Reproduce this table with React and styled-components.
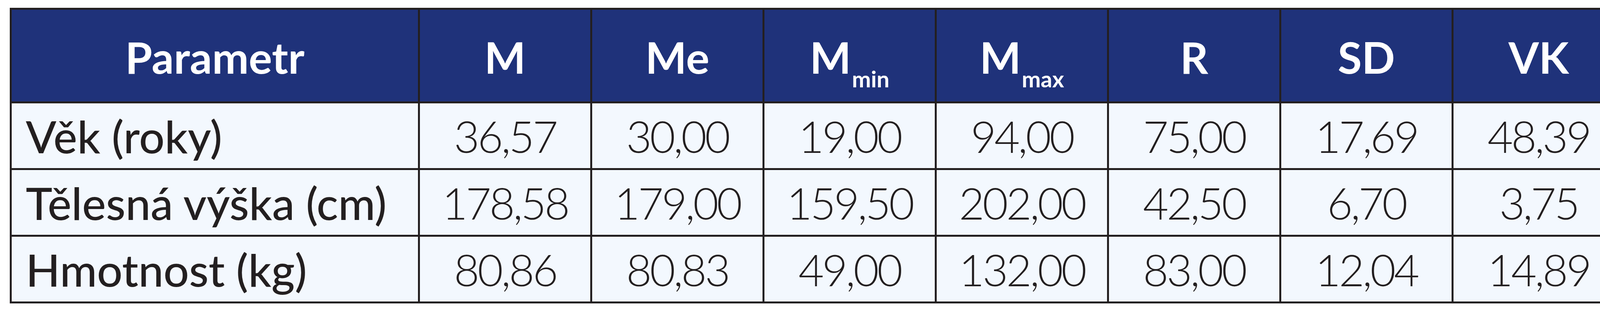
import React from 'react';
import styled, {createGlobalStyle} from 'styled-components';

const GlobalStyle = createGlobalStyle`
  html, body {
    margin: 0;
    padding: 0;
    background: #ffffff;
  }
  body {
    font-family: Lato, "Open Sans", "Liberation Sans", sans-serif;
  }
`

const Page = styled.div`
  padding: 20px 0 0 25px;
`

// the dark background shows through the gaps as the cell borders
const StatsGrid = styled.div`
  display: grid;
  grid-template-columns: 1040px repeat(7, 436px);
  grid-template-rows: 235px repeat(3, 166px);
  gap: 5px;
  padding: 5px;
  width: max-content;
  background-color: #231f20;
  color: #231f20;
`

const HeadCell = styled.div`
  display: flex;
  align-items: center;
  justify-content: center;
  padding-top: 6px;
  background-color: #1f327a;
  color: #ffffff;
  font-weight: 700;
  font-size: 112px;
  line-height: 1;

  sub {
    font-size: 58px;
    line-height: 0;
    align-self: flex-end;
    margin: 0 0 0 2px;
    transform: translateY(-58px);
  }
`

const Cell = styled.div`
  display: flex;
  align-items: center;
  justify-content: ${props => props.$label ? 'flex-start' : 'center'};
  padding: ${props => props.$label ? '0 0 0 36px' : '0'};
  background-color: #f3f8fe;
  font-size: ${props => props.$label ? '115px' : '113px'};
  font-weight: ${props => props.$label ? 500 : 300};
  letter-spacing: ${props => props.$label ? '0' : '-5px'};
  white-space: nowrap;
  line-height: 1;
`

const columns = [
    {key: 'M', label: 'M'},
    {key: 'Me', label: 'Me'},
    {key: 'Mmin', label: 'M', sub: 'min'},
    {key: 'Mmax', label: 'M', sub: 'max'},
    {key: 'R', label: 'R'},
    {key: 'SD', label: 'SD'},
    {key: 'VK', label: 'VK'},
]

const rows = [
    {name: 'Věk (roky)', values: ['36,57', '30,00', '19,00', '94,00', '75,00', '17,69', '48,39']},
    {name: 'Tělesná výška (cm)', values: ['178,58', '179,00', '159,50', '202,00', '42,50', '6,70', '3,75']},
    {name: 'Hmotnost (kg)', values: ['80,86', '80,83', '49,00', '132,00', '83,00', '12,04', '14,89']},
]

function App() {
    return (
        <>
            <GlobalStyle/>
            <Page>
                <StatsGrid>
                    <HeadCell>Parametr</HeadCell>
                    {columns.map(c => (
                        <HeadCell key={c.key}>
                            {c.label}
                            {c.sub && <sub>{c.sub}</sub>}
                        </HeadCell>
                    ))}
                    {rows.map(r => (
                        <React.Fragment key={r.name}>
                            <Cell $label>{r.name}</Cell>
                            {r.values.map((v, i) => <Cell key={i}>{v}</Cell>)}
                        </React.Fragment>
                    ))}
                </StatsGrid>
            </Page>
        </>
    );
}

export default App;
